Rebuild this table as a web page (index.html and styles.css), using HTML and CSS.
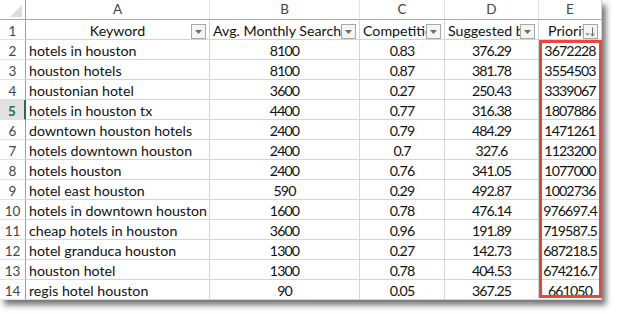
FILE: index.html
```html
<!DOCTYPE html>
<html>
<head>
<meta charset="utf-8">
<link rel="stylesheet" href="styles.css">
</head>
<body>
<div class="page">
  <div class="sheet">
    <div class="grid">
      <div class="corner"><span class="tri"></span></div>
      <div class="colh">A</div>
      <div class="colh">B</div>
      <div class="colh">C</div>
      <div class="colh">D</div>
      <div class="colh last">E</div>

      <div class="rowh">1</div>
      <div class="cell hd center">Keyword<span class="fbtn"><svg width="7" height="4" viewBox="0 0 7 4"><path d="M0 0H7L3.5 4Z" fill="#6b6b6b"/></svg></span></div>
      <div class="cell hd clip">Avg. Monthly Searches<span class="fbtn"><svg width="7" height="4" viewBox="0 0 7 4"><path d="M0 0H7L3.5 4Z" fill="#6b6b6b"/></svg></span></div>
      <div class="cell hd clip">Competition<span class="fbtn"><svg width="7" height="4" viewBox="0 0 7 4"><path d="M0 0H7L3.5 4Z" fill="#6b6b6b"/></svg></span></div>
      <div class="cell hd clip">Suggested bid<span class="fbtn"><svg width="7" height="4" viewBox="0 0 7 4"><path d="M0 0H7L3.5 4Z" fill="#6b6b6b"/></svg></span></div>
      <div class="cell hd center prio last"><span class="ptext">Priority</span><span class="fbtn"><svg width="11" height="10" viewBox="0 0 11 10"><path d="M0.5 6.5H4.5L2.5 8.5Z" fill="#6b6b6b"/><path d="M7.5 0.5V9" stroke="#6b6b6b" stroke-width="1"/><path d="M5.5 6.5L7.5 9.2L9.5 6.5" stroke="#6b6b6b" stroke-width="1" fill="none"/></svg></span></div>

      <div class="rowh">2</div><div class="cell">hotels in houston</div><div class="cell c">8100</div><div class="cell c">0.83</div><div class="cell c">376.29</div><div class="cell c last">3672228</div>
      <div class="rowh">3</div><div class="cell">houston hotels</div><div class="cell c">8100</div><div class="cell c">0.87</div><div class="cell c">381.78</div><div class="cell c last">3554503</div>
      <div class="rowh">4</div><div class="cell">houstonian hotel</div><div class="cell c">3600</div><div class="cell c">0.27</div><div class="cell c">250.43</div><div class="cell c last">3339067</div>
      <div class="rowh active">5</div><div class="cell">hotels in houston tx</div><div class="cell c">4400</div><div class="cell c">0.77</div><div class="cell c">316.38</div><div class="cell c last">1807886</div>
      <div class="rowh">6</div><div class="cell">downtown houston hotels</div><div class="cell c">2400</div><div class="cell c">0.79</div><div class="cell c">484.29</div><div class="cell c last">1471261</div>
      <div class="rowh">7</div><div class="cell">hotels downtown houston</div><div class="cell c">2400</div><div class="cell c">0.7</div><div class="cell c">327.6</div><div class="cell c last">1123200</div>
      <div class="rowh">8</div><div class="cell">hotels houston</div><div class="cell c">2400</div><div class="cell c">0.76</div><div class="cell c">341.05</div><div class="cell c last">1077000</div>
      <div class="rowh">9</div><div class="cell">hotel east houston</div><div class="cell c">590</div><div class="cell c">0.29</div><div class="cell c">492.87</div><div class="cell c last">1002736</div>
      <div class="rowh">10</div><div class="cell">hotels in downtown houston</div><div class="cell c">1600</div><div class="cell c">0.78</div><div class="cell c">476.14</div><div class="cell c last">976697.4</div>
      <div class="rowh">11</div><div class="cell">cheap hotels in houston</div><div class="cell c">3600</div><div class="cell c">0.96</div><div class="cell c">191.89</div><div class="cell c last">719587.5</div>
      <div class="rowh">12</div><div class="cell">hotel granduca houston</div><div class="cell c">1300</div><div class="cell c">0.27</div><div class="cell c">142.73</div><div class="cell c last">687218.5</div>
      <div class="rowh">13</div><div class="cell">houston hotel</div><div class="cell c">1300</div><div class="cell c">0.78</div><div class="cell c">404.53</div><div class="cell c last">674216.7</div>
      <div class="rowh">14</div><div class="cell">regis hotel houston</div><div class="cell c">90</div><div class="cell c">0.05</div><div class="cell c">367.25</div><div class="cell c last">661050</div>
    </div>
    <div class="highlight"></div>
  </div>
</div>
</body>
</html>
```

FILE: styles.css
```css
* { box-sizing: border-box; }
html, body { margin: 0; padding: 0; background: #ffffff; }
body { width: 618px; height: 314px; overflow: hidden; }
.page { width: 618px; height: 314px; }
.sheet {
  position: relative;
  width: 602px;
  height: 300px;
  background: #ffffff;
  box-shadow: 4px 5px 6px rgba(0, 0, 0, 0.55);
  font-family: "Lato", "Liberation Sans", sans-serif;
  font-size: 14.2px;
  color: #111111;
}
.grid {
  display: grid;
  grid-template-columns: 26px 184px 150px 85px 94px 63px;
  grid-template-rows: repeat(15, 20px);
}
.corner {
  position: relative;
  border-right: 1px solid #9f9f9f;
  border-bottom: 1px solid #ababab;
}
.tri {
  position: absolute;
  right: 3px;
  bottom: 2px;
  width: 0;
  height: 0;
  border-left: 12px solid transparent;
  border-bottom: 12px solid #dcdcdc;
}
.colh {
  border-right: 1px solid #e1e1e1;
  border-bottom: 1px solid #ababab;
  color: #444444;
  text-align: center;
  font-size: 13.5px;
  line-height: 19px;
}
.colh.last { border-right: 1px solid #d4d4d4; }
.rowh {
  border-right: 1px solid #9f9f9f;
  border-bottom: 1px solid #e1e1e1;
  color: #444444;
  text-align: center;
  font-size: 13.5px;
  line-height: 20px;
  padding-top: 1px;
}
.rowh.active {
  background: #e1e1e1;
  color: #217346;
  font-weight: bold;
  border-right: 2px solid #217346;
}
.cell {
  position: relative;
  border-right: 1px solid #d4d4d4;
  border-bottom: 1px solid #d4d4d4;
  padding: 1px 3px 0 3px;
  line-height: 20px;
  white-space: nowrap;
  overflow: hidden;
}
.cell.c, .cell.center { text-align: center; padding-left: 0; padding-right: 0; }
.cell.c { letter-spacing: -0.9px; }
.cell.prio { text-align: left; padding-left: 9px; }
.fbtn {
  position: absolute;
  right: 3px;
  top: 4px;
  width: 15px;
  height: 15px;
  border: 1px solid #a8a8a8;
  background: #f4f4f4;
  display: flex;
  align-items: center;
  justify-content: center;
}
.highlight {
  position: absolute;
  left: 539px;
  top: 40px;
  width: 63px;
  height: 258px;
  border: 3px solid #e8473e;
}
```
